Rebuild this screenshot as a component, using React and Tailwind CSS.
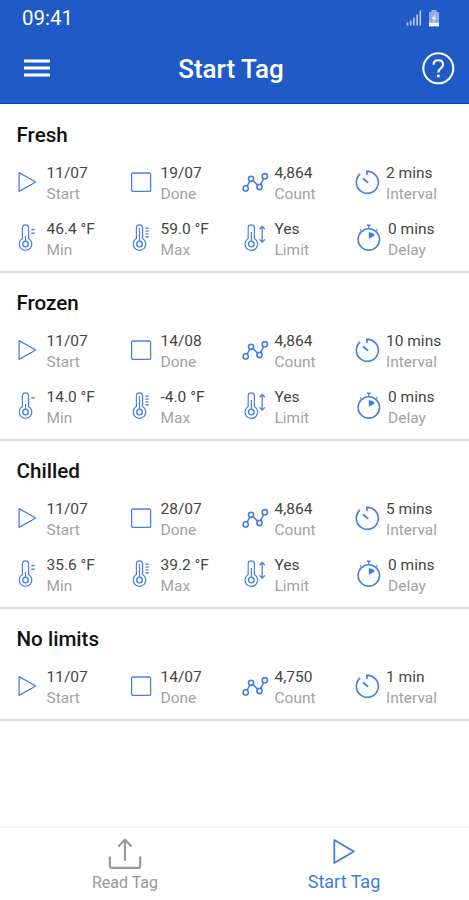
import clsx from "clsx"

const profiles = [
    {
        name: "Fresh",
        start: "11/07",
        done: "19/07",
        count: "4,864",
        interval: "2 mins",
        limits: { min: "46.4 °F", max: "59.0 °F", delay: "0 mins", minTicks: 2 },
    },
    {
        name: "Frozen",
        start: "11/07",
        done: "14/08",
        count: "4,864",
        interval: "10 mins",
        limits: { min: "14.0 °F", max: "-4.0 °F", delay: "0 mins", minTicks: 1 },
    },
    {
        name: "Chilled",
        start: "11/07",
        done: "28/07",
        count: "4,864",
        interval: "5 mins",
        limits: { min: "35.6 °F", max: "39.2 °F", delay: "0 mins", minTicks: 2 },
    },
    { name: "No limits", start: "11/07", done: "14/07", count: "4,750", interval: "1 min" },
]

function Icon({ children }) {
    return (
        <svg
            viewBox="0 0 30 42"
            className="w-[30px] h-[42px] shrink-0 overflow-visible"
            fill="none"
            stroke="#4a7fe6"
            strokeWidth="1.3"
        >
            {children}
        </svg>
    )
}

function PlayIcon() {
    return (
        <Icon>
            <path d="M2.1 10.6v18.8L18.7 20z" strokeLinejoin="round" />
        </Icon>
    )
}

function StopIcon() {
    return (
        <Icon>
            <rect x="0.6" y="11" width="19" height="18.4" rx="1.2" />
        </Icon>
    )
}

function CountIcon() {
    return (
        <Icon>
            <g strokeWidth="1.6">
                <path d="M2.1 24.1 4.8 19M8.2 18.9l4.5 4.2M15.6 22.7l3.1-6.2" />
                <circle cx="0.7" cy="26.4" r="2.6" />
                <circle cx="6.1" cy="16.8" r="2.6" />
                <circle cx="14.5" cy="25" r="2.6" />
                <circle cx="19.8" cy="14.2" r="2.6" />
            </g>
        </Icon>
    )
}

function IntervalIcon() {
    return (
        <Icon>
            <path d="M10.9 13V9.3A11 11 0 1 1 4.1 12" strokeWidth="1.7" />
            <path d="M7 16.2l5.2 4.7" strokeWidth="1.9" />
        </Icon>
    )
}

function DelayIcon() {
    return (
        <Icon>
            <circle cx="12.8" cy="21.4" r="10.7" strokeWidth="1.6" />
            <path d="M12.8 10.5V7.2M11 7.2h3.6M5.2 12.4 4 11.2M20.4 12.4l1.2-1.2" strokeWidth="1.4" />
            <path d="M12.8 20.8V14.2a6.8 6.8 0 0 1 6 3.3z" fill="#3f78e8" stroke="none" />
        </Icon>
    )
}

function Thermometer({ x, level }) {
    return (
        <>
            <path d={`M${x - 3.1} 20.6V10a3.1 3.1 0 0 1 6.2 0v10.6a6.3 6.3 0 1 1-6.2 0z`} strokeWidth="1.2" />
            <circle cx={x} cy="26.1" r="2.8" strokeWidth="1.4" />
            <path d={`M${x} 23.3V${level}`} strokeWidth="1.2" />
        </>
    )
}

function MinIcon({ ticks }) {
    return (
        <Icon>
            <Thermometer x={8.5} level={18} />
            <path d={ticks === 2 ? "M14.3 11.6h3.2M14.3 15.3h3.2" : "M14.3 11.8h3.2"} strokeWidth="1.5" />
        </Icon>
    )
}

function MaxIcon() {
    return (
        <Icon>
            <Thermometer x={8.5} level={10} />
            <path d="M14.6 10.3h3M14.6 13.1h3M14.6 15.9h3M14.6 18.8h3" strokeWidth="1.4" />
        </Icon>
    )
}

function LimitIcon() {
    return (
        <Icon>
            <Thermometer x={6.3} level={14} />
            <path d="M17.2 8.5v15.6M14.5 11.2l2.7-2.7 2.7 2.7M14.5 21.4l2.7 2.7 2.7-2.7" />
        </Icon>
    )
}

function Stat({ icon, value, label, indent }) {
    return (
        <div className="flex">
            {icon}
            <div className={clsx("whitespace-nowrap pt-px text-[15.5px] leading-[21px]", indent && "pl-0.5")}>
                <div className="text-[#444]">{value}</div>
                <div className="text-[#a3a3a3]">{label}</div>
            </div>
        </div>
    )
}

function ProfileCard({ profile }) {
    const { limits } = profile
    return (
        <section className="border-b-2 border-[#dcdcdc] pt-[18px] pb-[10px] pl-[16.5px]">
            <h2 className="text-[20.6px] leading-6 font-medium text-[#111]">{profile.name}</h2>
            <div className="mt-[15px] grid grid-cols-[114px_114px_111.5px_1fr] gap-y-[13px]">
                <Stat icon={<PlayIcon />} value={profile.start} label="Start" />
                <Stat icon={<StopIcon />} value={profile.done} label="Done" />
                <Stat icon={<CountIcon />} value={profile.count} label="Count" />
                <Stat icon={<IntervalIcon />} value={profile.interval} label="Interval" />
                {limits && (
                    <>
                        <Stat icon={<MinIcon ticks={limits.minTicks} />} value={limits.min} label="Min" />
                        <Stat icon={<MaxIcon />} value={limits.max} label="Max" />
                        <Stat icon={<LimitIcon />} value="Yes" label="Limit" />
                        <Stat icon={<DelayIcon />} value={limits.delay} label="Delay" indent />
                    </>
                )}
            </div>
        </section>
    )
}

function Header() {
    return (
        <header className="h-[104px] bg-[#1f5ac6] text-white border-b border-[#0f45bd]">
            {/* Status bar */}
            <div className="flex h-9 items-center justify-between pl-[22px] pr-[29px]">
                <span className="text-[20.5px] leading-9">09:41</span>
                <div className="flex items-center gap-[6px]">
                    <svg viewBox="0 0 16 16" className="h-4 w-4" stroke="#d3e0f8">
                        <path d="M1.5 15.5v-3M4.7 15.5v-5M7.9 15.5v-8M11.1 15.5v-11M14.3 15.5v-15" strokeWidth="1.6" strokeOpacity="0.85" />
                    </svg>
                    <svg viewBox="0 0 12 17" className="h-[17px] w-3">
                        <path d="M3.5 0h5v2H11v14.5H1V2h2.5z" fill="#8fadE6" />
                        <path d="M1 12.8h10v3.4H1z" fill="#fff" />
                        <path d="M7 4 3.6 8.9h2.2L5 12.6l3.6-5.1H6.3z" fill="#e8effc" />
                    </svg>
                </div>
            </div>
            {/* Title bar */}
            <div className="flex h-[66px] items-center justify-between pl-[24px] pr-[14px]">
                <svg viewBox="0 0 26 18" className="h-[18px] w-[26px] mb-[3px]" stroke="currentColor" strokeWidth="2.9">
                    <path d="M0 2h26M0 9h26M0 16h26" />
                </svg>
                <h1 className="pr-[9px] text-[26px] font-medium">Start Tag</h1>
                <svg viewBox="0 0 34 34" className="h-[34px] w-[34px] mb-[2px]" fill="none" stroke="currentColor" strokeWidth="2.1">
                    <circle cx="17.3" cy="17.3" r="15" />
                    <path d="M12.6 13.7c0-2.8 2-4.4 4.7-4.4s4.7 1.6 4.7 4.2c0 2-1.1 2.9-2.5 4.1-1.5 1.2-2.2 1.9-2.2 3.9" />
                    <path d="M17.3 23.7v2.5" strokeWidth="2.6" />
                </svg>
            </div>
        </header>
    )
}

function BottomNav() {
    return (
        <nav className="mt-auto flex h-[74px] justify-center border-t-2 border-[#f5f5f5]">
            <button className="flex w-[219px] flex-col items-center pt-[9px] text-[#999]">
                <svg viewBox="0 0 34 32" className="h-8 w-[34px]" fill="none" stroke="currentColor" strokeWidth="2.2">
                    <path d="M1.8 19.5v9q0 2.4 2.4 2.4h25.6q2.4 0 2.4-2.4v-9M17 24V3M10.3 9.5 17 2.7 23.7 9.5" />
                </svg>
                <span className="mt-1 text-base leading-5">Read Tag</span>
            </button>
            <button className="flex w-[219px] flex-col items-center pt-[9px] text-[#427ae4]">
                <svg viewBox="0 0 24 28" className="h-7 w-6" fill="none" stroke="currentColor" strokeWidth="1.7">
                    <path d="M2.3 3v23L21.9 14.5z" strokeLinejoin="round" />
                </svg>
                <span className="mt-[7px] text-lg leading-5">Start Tag</span>
            </button>
        </nav>
    )
}

export default function App() {
    return (
        <div className="flex h-screen w-full flex-col bg-white font-['Roboto',sans-serif]">
            <Header />
            <main className="pt-px">
                {profiles.map((profile) => (
                    <ProfileCard key={profile.name} profile={profile} />
                ))}
            </main>
            <BottomNav />
        </div>
    )
}
